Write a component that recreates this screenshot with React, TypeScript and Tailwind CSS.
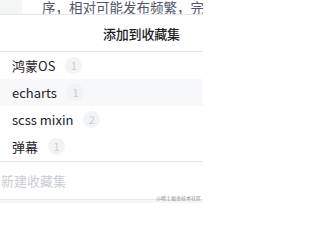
export default function App() {
  const items = [
    { name: "鸿蒙OS", count: 1 },
    { name: "echarts", count: 1, hover: true },
    { name: "scss mixin", count: 2 },
    { name: "弹幕", count: 1 },
  ];
  return (
    <div
      className="w-[203px] h-[203px] overflow-hidden bg-white flex flex-col relative"
      style={{ fontFamily: '"Noto Sans CJK SC", "Noto Sans", sans-serif' }}
    >
      <div className="h-[15px] flex border-b border-[#e4e6eb] shrink-0">
        <div className="w-[22px] bg-[#f4f5f5]" />
        <div className="flex-1 bg-white overflow-hidden whitespace-nowrap pl-[20px] pt-[1px] text-[13.5px] leading-[13px] text-[#515767]">
          序，相对可能发布频繁，完
        </div>
      </div>
      <div className="h-[37px] flex items-center pl-[103px] pt-[1px] shrink-0 border-b border-[#e5e6eb]">
        <span className="text-[13px] font-medium text-[#1d2129] whitespace-nowrap tracking-[-0.2px]">添加到收藏集</span>
      </div>
      <div className="flex flex-col shrink-0">
        {items.map((it) => (
          <div
            key={it.name}
            className={`h-[27px] flex items-center pl-[12px] ${it.hover ? "bg-[#f7f8fa]" : ""}`}
          >
            <span className="text-[13px] text-[#1d2129] whitespace-nowrap">{it.name}</span>
            <span className="ml-[10px] w-[17px] h-[17px] rounded-full bg-[#f2f3f5] text-[#c9cdd4] text-[11px] flex items-center justify-center">
              {it.count}
            </span>
          </div>
        ))}
      </div>
      <div className="h-px bg-[#e5e6eb] mt-[1px] shrink-0" />
      <div className="h-[37px] flex items-center pl-[1px] shrink-0">
        <span className="text-[13px] text-[#c9cdd4] whitespace-nowrap">新建收藏集</span>
      </div>
      <div className="flex-1 bg-[#f4f5f5] border-t border-[#e4e6eb]" />
      <span className="absolute right-[2px] bottom-[3px] text-[5px] leading-[5px] text-[#8a919f] whitespace-nowrap">
        @稀土掘金技术社区
      </span>
    </div>
  );
}
